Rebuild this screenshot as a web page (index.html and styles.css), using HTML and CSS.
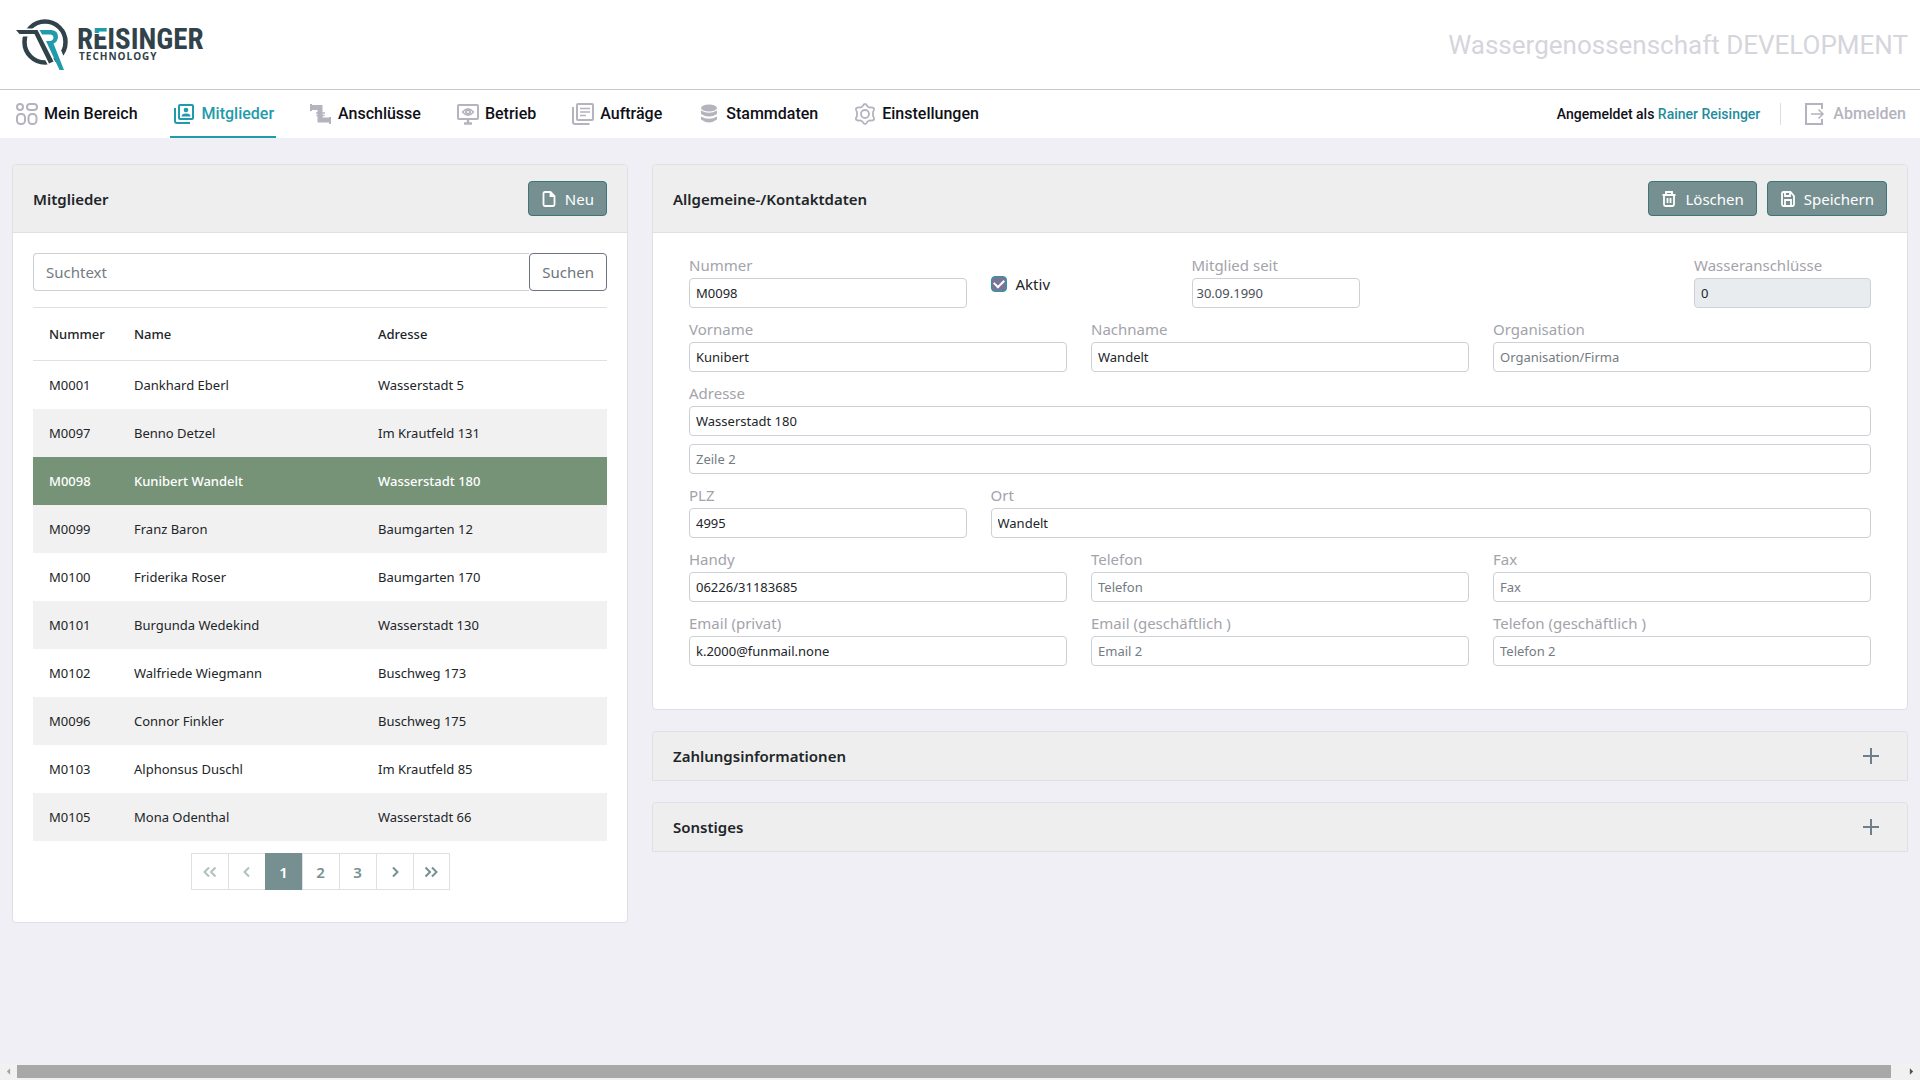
FILE: index.html
```html
<!DOCTYPE html>
<html lang="de">
<head>
<meta charset="utf-8">
<title>Mitglieder – Reisinger Technology</title>
<link rel="stylesheet" href="styles.css">
</head>
<body>
<header class="topbar">
  <a class="logo" href="#" aria-label="Reisinger Technology">
    <svg width="194" height="58" viewBox="14 16 194 58">
      <defs>
        <linearGradient id="e-bar" gradientUnits="userSpaceOnUse" x1="0" y1="28" x2="0" y2="50">
          <stop offset=".23" stop-color="#1f9bab"/><stop offset=".23" stop-color="#fff"/>
          <stop offset=".29" stop-color="#fff"/><stop offset=".29" stop-color="#31424a"/>
        </linearGradient>
      </defs>
      <circle cx="45" cy="42" r="20.500" fill="none" stroke="#31424a" stroke-width="4.500"/>
      <path d="M19 32.500H35L53 66M38 34h12l15 36" fill="none" stroke="#fff" stroke-width="8"/>
      <path d="M16 30H37.500L53.500 61.500 49 63.500 34.500 34H19.500Z" fill="#31424a"/>
      <path d="M39.500 30H51.500Q58 30.500 58 37 57.500 42 53.500 43.500L64 70H59.500L46 41H50.500Q53.500 40.500 53.500 37 53 34.500 50.500 34.500H42Z" fill="#1f9bab"/>
      <text class="logo-name" x="77" y="49">R<tspan fill="url(#e-bar)">E</tspan>ISINGER</text>
      <text class="logo-sub" x="79" y="60">TECHNOLOGY</text>
    </svg>
  </a>
  <div class="tenant">Wassergenossenschaft DEVELOPMENT</div>
</header>

<nav class="nav">
  <a class="nav-item" href="#">
    <svg class="nav-icon" viewBox="0 0 22 22" fill="none" stroke="currentColor" stroke-width="2"><rect x="1" y="1" width="6" height="6" rx="3"/><rect x="11" y="1" width="10" height="6" rx="3"/><rect x="1" y="11" width="8" height="10" rx="3.500"/><rect x="12.500" y="11" width="8" height="10" rx="3.500"/></svg>
    Mein Bereich</a>
  <a class="nav-item active" href="#" aria-current="page">
    <svg class="nav-icon" viewBox="0 0 22 22" fill="none" stroke="currentColor" stroke-width="2"><rect x="5" y="2" width="14" height="14" rx="1"/><path d="M1 5v13q0 2 2 2h13"/><g fill="currentColor" stroke="none"><circle cx="12" cy="7" r="2.300"/><path d="M7.500 13.500q0-3 4.500-3t4.500 3z"/></g></svg>
    Mitglieder</a>
  <a class="nav-item" href="#">
    <svg class="nav-icon" viewBox="0 0 22 22" fill="none" stroke="currentColor"><path d="M1 1v7M20 14v7" stroke-width="2"/><path d="M1 4.500h9v12.500h10" stroke-width="5"/><path d="M6 10h9M6.500 12.500h8" stroke-width="1.500"/></svg>
    Anschlüsse</a>
  <a class="nav-item" href="#">
    <svg class="nav-icon" viewBox="0 0 22 22" fill="none" stroke="currentColor" stroke-width="2"><rect x="1" y="2" width="20" height="14" rx="1"/><path d="M11 16v4M7 20.500h8" stroke-width="2.500"/><path d="M5.500 9q5.500-6.500 11 0-5.500 6.500-11 0Z" stroke-width="1.500"/><circle cx="11" cy="9" r="2"/></svg>
    Betrieb</a>
  <a class="nav-item" href="#">
    <svg class="nav-icon" viewBox="0 0 22 22" fill="none" stroke="currentColor" stroke-width="2"><rect x="5" y="1" width="16" height="16" rx="1"/><path d="M1 4v15q0 2 2 2h14.500"/><path d="M8 5.500h10M8 9h10M8 12.500h6" stroke-width="1.500"/></svg>
    Aufträge</a>
  <a class="nav-item" href="#">
    <svg class="nav-icon" viewBox="0 0 22 22" fill="currentColor"><ellipse cx="11" cy="5" rx="8" ry="3.500"/><path d="M3 7.500q8 4.500 16 0v3.500q-8 5-16 0zM3 13.500q8 4.500 16 0v3q-8 6-16 0z"/></svg>
    Stammdaten</a>
  <a class="nav-item" href="#">
    <svg class="nav-icon" viewBox="0 0 22 22" fill="none" stroke="currentColor" stroke-width="1.800" stroke-linejoin="round"><path d="M11 1q1.500 0 2.500 2.500l2 1q3-.500 4.500 1 .500 1.500-1 3.500v4q1.500 2 1 3.500-1.500 1.500-4.500 1l-2 1Q12.500 21 11 21t-2.500-2.500l-2-1q-3 .500-4.500-1-.500-1.500 1-3.500v-4q-1.500-2-1-3.500 1.500-1.500 4.500-1l2-1Q9.500 1 11 1Z"/><circle cx="11" cy="11" r="4"/></svg>
    Einstellungen</a>
  <div class="session">
    <span class="user">Angemeldet als <a href="#">Rainer Reisinger</a></span>
    <a class="logout" href="#">
      <svg class="nav-icon" viewBox="0 0 22 22" fill="none" stroke="currentColor" stroke-width="2"><path d="M17 6V1H1v20h16v-5"/><path d="M6 11h12M13.500 6.500 18 11l-4.500 4.500" stroke-width="1.500"/></svg>
      Abmelden</a>
  </div>
</nav>

<main class="content">
  <section class="card list">
    <div class="card-head">
      <h2>Mitglieder</h2>
      <div class="actions">
        <button class="btn" type="button"><svg class="btn-icon" viewBox="0 0 16 16"><path d="M9.500 1H4Q2.500 1 2.500 2.500v11Q2.500 15 4 15h8q1.500 0 1.500-1.500V5zM9.500 1v4h4"/></svg>Neu</button>
      </div>
    </div>
    <div class="list-body">
      <form class="search">
        <input type="text" placeholder="Suchtext" aria-label="Suchtext">
        <button type="button">Suchen</button>
      </form>
      <table class="members">
        <colgroup><col class="c-num"><col class="c-name"><col></colgroup>
        <thead><tr><th>Nummer</th><th>Name</th><th>Adresse</th></tr></thead>
        <tbody>
          <tr><td>M0001</td><td>Dankhard Eberl</td><td>Wasserstadt 5</td></tr>
          <tr><td>M0097</td><td>Benno Detzel</td><td>Im Krautfeld 131</td></tr>
          <tr class="selected"><td>M0098</td><td>Kunibert Wandelt</td><td>Wasserstadt 180</td></tr>
          <tr><td>M0099</td><td>Franz Baron</td><td>Baumgarten 12</td></tr>
          <tr><td>M0100</td><td>Friderika Roser</td><td>Baumgarten 170</td></tr>
          <tr><td>M0101</td><td>Burgunda Wedekind</td><td>Wasserstadt 130</td></tr>
          <tr><td>M0102</td><td>Walfriede Wiegmann</td><td>Buschweg 173</td></tr>
          <tr><td>M0096</td><td>Connor Finkler</td><td>Buschweg 175</td></tr>
          <tr><td>M0103</td><td>Alphonsus Duschl</td><td>Im Krautfeld 85</td></tr>
          <tr><td>M0105</td><td>Mona Odenthal</td><td>Wasserstadt 66</td></tr>
        </tbody>
      </table>
      <div class="pager">
        <button type="button" disabled aria-label="Erste Seite"><svg viewBox="0 0 16 16"><path d="M7 3.500 2.500 8 7 12.500M13.500 3.500 9 8l4.500 4.500"/></svg></button>
        <button type="button" disabled aria-label="Vorige Seite"><svg viewBox="0 0 16 16"><path d="M10 3.500 5.500 8l4.500 4.500"/></svg></button>
        <button type="button" class="current">1</button>
        <button type="button">2</button>
        <button type="button">3</button>
        <button type="button" aria-label="Nächste Seite"><svg viewBox="0 0 16 16"><path d="M6 3.500 10.500 8 6 12.500"/></svg></button>
        <button type="button" aria-label="Letzte Seite"><svg viewBox="0 0 16 16"><path d="M2.500 3.500 7 8l-4.500 4.500M9 3.500 13.500 8 9 12.500"/></svg></button>
      </div>
    </div>
  </section>

  <div class="detail">
    <section class="card">
      <div class="card-head">
        <h2>Allgemeine-/Kontaktdaten</h2>
        <div class="actions">
          <button class="btn" type="button"><svg class="btn-icon" viewBox="0 0 16 16"><path d="M1.500 4h13M5 4V1h6v3M3 4v9.500Q3 15 4.500 15h7q1.500 0 1.500-1.500V4M6.500 7v5M9.500 7v5"/></svg>Löschen</button>
          <button class="btn" type="button"><svg class="btn-icon" viewBox="0 0 16 16"><path d="M10.500 1H3.500Q2 1 2 2.500v11Q2 15 3.500 15h9q1.500 0 1.500-1.500V5zM5 15V9h6v6M5 1v4h5V1"/></svg>Speichern</button>
        </div>
      </div>
      <form class="form">
        <div class="field s3"><label for="num">Nummer</label><input id="num" type="text" value="M0098"></div>
        <div class="check s2"><input id="aktiv" type="checkbox" checked><label for="aktiv">Aktiv</label></div>
        <div class="field s5"><label for="seit">Mitglied seit</label><input id="seit" class="date" type="text" value="30.09.1990"></div>
        <div class="field s2"><label for="wasser">Wasseranschlüsse</label><input id="wasser" type="text" value="0" disabled></div>

        <div class="field s4"><label for="vor">Vorname</label><input id="vor" type="text" value="Kunibert"></div>
        <div class="field s4"><label for="nach">Nachname</label><input id="nach" type="text" value="Wandelt"></div>
        <div class="field s4"><label for="org">Organisation</label><input id="org" type="text" placeholder="Organisation/Firma"></div>

        <div class="field s12"><label for="adr">Adresse</label><input id="adr" type="text" value="Wasserstadt 180"></div>
        <div class="field s12"><input type="text" placeholder="Zeile 2" aria-label="Adresse Zeile 2"></div>

        <div class="field s3"><label for="plz">PLZ</label><input id="plz" type="text" value="4995"></div>
        <div class="field s9"><label for="ort">Ort</label><input id="ort" type="text" value="Wandelt"></div>

        <div class="field s4"><label for="handy">Handy</label><input id="handy" type="text" value="06226/31183685"></div>
        <div class="field s4"><label for="tel">Telefon</label><input id="tel" type="text" placeholder="Telefon"></div>
        <div class="field s4"><label for="fax">Fax</label><input id="fax" type="text" placeholder="Fax"></div>

        <div class="field s4"><label for="mail">Email (privat)</label><input id="mail" type="text" value="k.2000@funmail.none"></div>
        <div class="field s4"><label for="mail2">Email (geschäftlich )</label><input id="mail2" type="text" placeholder="Email 2"></div>
        <div class="field s4"><label for="tel2">Telefon (geschäftlich )</label><input id="tel2" type="text" placeholder="Telefon 2"></div>
      </form>
    </section>

    <section class="card collapsed">
      <h2>Zahlungsinformationen</h2>
      <button class="expand" type="button" aria-label="Zahlungsinformationen öffnen"><svg viewBox="0 0 16 16"><path d="M8 0v16M0 8h16"/></svg></button>
    </section>
    <section class="card collapsed">
      <h2>Sonstiges</h2>
      <button class="expand" type="button" aria-label="Sonstiges öffnen"><svg viewBox="0 0 16 16"><path d="M8 0v16M0 8h16"/></svg></button>
    </section>
  </div>
</main>

<div class="hscroll" aria-hidden="true">
  <svg class="arrow faint" viewBox="0 0 16 16"><path d="M10 4v8L6 8z"/></svg>
  <div class="thumb"></div>
  <svg class="arrow" viewBox="0 0 16 16"><path d="M6 4v8l4-4z"/></svg>
</div>
</body>
</html>
```
FILE: styles.css
```css
* { box-sizing: border-box; }

body {
  margin: 0;
  min-height: 100vh;
  display: flex;
  flex-direction: column;
  background: #f0eff5;
  color: #212529;
  font: 15px/24px "Noto Sans", "Open Sans", sans-serif;
}

button, input { font: inherit; }
a { color: inherit; text-decoration: none; }

/* Header */
.topbar {
  display: flex;
  justify-content: space-between;
  align-items: center;
  height: 90px;
  padding: 0 12px 0 14px;
  background: #fff;
  border-bottom: 1px solid #c6c6cb;
}
.logo svg { display: block; }
.logo-name { font: bold 29px "Liberation Sans Narrow", "Roboto Condensed", "Roboto", sans-serif; fill: #31424a; }
.logo-sub { font: bold 10px "Open Sans", sans-serif; letter-spacing: 1px; fill: #31424a; }
.tenant { font: 26px/32px "Roboto", sans-serif; color: #d5d5dc; }

/* Navigation */
.nav {
  display: flex;
  gap: 30px;
  height: 48px;
  padding: 0 12px;
  background: #fff;
  font: 500 16px/24px "Roboto", sans-serif;
  color: #101018;
}
.nav-item {
  display: flex;
  align-items: center;
  gap: 6px;
  padding: 0 2px 0 4px;
  border: solid transparent;
  border-width: 2px 0;
}
.nav-icon { width: 22px; height: 22px; flex: none; color: #b5b4be; }
.nav-item.active { color: #1f9bab; border-bottom-color: #1f9bab; }
.nav-item.active .nav-icon { color: #1f9bab; }
.session { display: flex; align-items: center; margin-left: auto; }
.user { font-size: 14px; padding-right: 20px; border-right: 1px solid #dcdce2; line-height: 22px; }
.user a { color: #1f8c9c; }
.logout { display: flex; align-items: center; gap: 6px; padding: 0 2px 0 24px; color: #b5b4be; }

/* Cards */
.content {
  flex: 1;
  display: grid;
  grid-template-columns: repeat(12, minmax(0, 1fr));
  align-items: start;
  gap: 24px;
  padding: 26px 12px;
}
.list { grid-column: span 4; }
.detail { grid-column: span 8; display: grid; gap: 21px; }
.card { background: #fff; border: 1px solid #dfdfe6; border-radius: 4px; }
.card h2 { margin: 0; font-size: 15px; font-weight: 600; }
.card-head {
  display: flex;
  justify-content: space-between;
  align-items: center;
  padding: 16px 20px;
  background: #eee;
  border-bottom: 1px solid #dfdfe6;
  border-radius: 3px 3px 0 0;
}
.actions { display: flex; gap: 10px; }
.btn {
  display: flex;
  align-items: center;
  gap: 8px;
  height: 35px;
  padding: 0 12px;
  border: 1px solid #3f7478;
  border-radius: 4px;
  background: #769092;
  color: #fff;
}
.btn-icon { width: 16px; height: 16px; fill: none; stroke: currentColor; stroke-width: 1.8; }

/* Member list */
.list-body { padding: 20px 20px 32px; }
.search { display: flex; margin-bottom: 16px; }
.search input {
  flex: 1;
  min-width: 0;
  height: 38px;
  padding: 0 12px;
  border: 1px solid #ced0d8;
  border-right: 0;
  border-radius: 4px 0 0 4px;
}
.search button {
  height: 38px;
  padding: 0 12px;
  border: 1px solid #6c757d;
  border-radius: 4px;
  background: #fff;
  color: #6c757d;
}
::placeholder { color: #757b82; opacity: 1; }
.members { width: 100%; table-layout: fixed; border-collapse: separate; border-spacing: 0; font-size: 13px; }
.c-num { width: 85px; }
.c-name { width: 244px; }
.members th {
  height: 54px;
  padding: 0 16px;
  border: solid #dfdfe6;
  border-width: 1px 0;
  text-align: left;
  font-weight: 500;
}
.members td { height: 48px; padding: 0 16px; }
.members tbody tr:nth-child(even) { background: #f1f1f1; }
.members tbody tr.selected { background: #769378; color: #fff; font-weight: 500; }
.pager { display: flex; justify-content: center; margin-top: 12px; }
.pager button {
  display: grid;
  place-items: center;
  width: 37px;
  height: 37px;
  padding: 0;
  border: 1px solid #dfdfe6;
  border-right-width: 0;
  background: #fff;
  color: #769092;
  font-weight: 600;
}
.pager button:last-child { border-right-width: 1px; }
.pager button:disabled { color: #b3c0c1; }
.pager .current { background: #769092; border-color: #769092; color: #fff; }
.pager svg { width: 16px; height: 16px; fill: none; stroke: currentColor; stroke-width: 2; }

/* Contact form */
.form {
  display: grid;
  grid-template-columns: repeat(12, minmax(0, 1fr));
  gap: 8px 24px;
  padding: 19px 36px 43px;
}
.s2 { grid-column: span 2; }
.s3 { grid-column: span 3; }
.s4 { grid-column: span 4; }
.s5 { grid-column: span 5; }
.s9 { grid-column: span 9; }
.s12 { grid-column: span 12; }
.field label { display: block; height: 26px; line-height: 26px; color: #a3a3ab; }
.field input {
  display: block;
  width: 100%;
  height: 30px;
  padding: 0 6px;
  border: 1px solid #ced0d8;
  border-radius: 4px;
  background: #fff;
  color: #212529;
  font-size: 13px;
}
.field input:disabled { background: #e9ecef; }
.field .date { width: 168px; padding: 0 4px; color: #495057; }
.check { display: flex; align-items: center; gap: 9px; padding-top: 8px; }
.check input {
  appearance: none;
  width: 16px;
  height: 16px;
  margin: 0;
  border: 1px solid #1f9bab;
  border-radius: 4px;
  background: #7a7595;
  display: grid;
  place-items: center;
}
.check input::before {
  content: "";
  width: 8px;
  height: 5px;
  margin-bottom: 3px;
  border: solid #fff;
  border-width: 0 0 2px 2px;
  transform: rotate(-45deg);
}

/* Collapsed sections */
.collapsed {
  display: flex;
  justify-content: space-between;
  align-items: center;
  height: 50px;
  padding: 0 28px 0 20px;
  background: #eee;
  border-radius: 4px 4px 0 0;
}
.expand { padding: 0; border: 0; background: none; color: #6f7f8a; }
.expand svg { display: block; width: 16px; height: 16px; stroke: currentColor; stroke-width: 2; }

/* Horizontal scroll strip */
.hscroll { display: flex; height: 16px; background: #f1f1f1; align-items: flex-start; padding-top: 1px; }
.thumb { flex: 1; height: 13px; margin-right: 12px; background: #a8a8a8; }
.arrow { width: 17px; height: 13px; flex: none; fill: #505050; }
.arrow.faint { fill: #a3a3a3; }
```
